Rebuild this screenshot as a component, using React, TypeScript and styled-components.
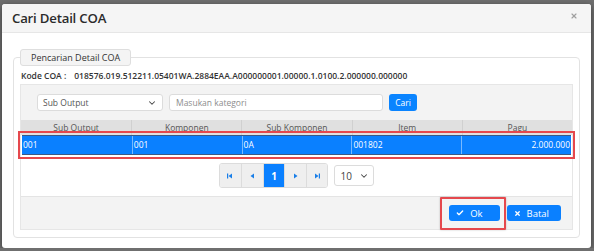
import React from 'react'
import styled, { createGlobalStyle } from 'styled-components'
import { Check, ChevronDown, X } from 'lucide-react'

const GlobalStyle = createGlobalStyle`
    * { box-sizing: border-box; }
    body {
        margin: 0;
        background: #6f6f6f;
        font-family: "Open Sans", "Noto Sans", sans-serif;
        color: #333;
    }
`

const columns = ["Sub Output", "Komponen", "Sub Komponen", "Item", "Pagu"]
const rows = [
    { subOutput: "001", komponen: "001", subKomponen: "0A", item: "001802", pagu: "2.000.000" }
]

const PageIcon = ({ kind }: { kind: 'first' | 'prev' | 'next' | 'last' }) => {
    const left = kind === 'first' || kind === 'prev'
    const bar = kind === 'first' || kind === 'last'
    return (
        <svg width="6" height="6" viewBox="0 0 6 6">
            {left ? <polygon points="5,0.5 5,5.5 1.5,3" fill="#1a7fe8" /> : <polygon points="1,0.5 1,5.5 4.5,3" fill="#1a7fe8" />}
            {bar && (left ? <rect x="0" y="0.5" width="1.2" height="5" fill="#1a7fe8" /> : <rect x="4.8" y="0.5" width="1.2" height="5" fill="#1a7fe8" />)}
        </svg>
    )
}

export default function App() {
    const [selected] = React.useState(0)
    return (
        <>
            <GlobalStyle />
            <Modal>
                <Header>
                    <Title>Cari Detail COA</Title>
                    <CloseButton><X size={8} strokeWidth={3.5} /></CloseButton>
                </Header>
                <Body>
                    <Fieldset>
                        <Legend>Pencarian Detail COA</Legend>
                        <KodeRow>
                            <span>Kode COA :</span>
                            <span>018576.019.512211.05401WA.2884EAA.A000000001.00000.1.0100.2.000000.000000</span>
                        </KodeRow>
                        <Panel>
                            <SearchRow>
                                <Select>
                                    Sub Output
                                    <ChevronDown size={10} strokeWidth={2.5} color="#444" />
                                </Select>
                                <Input placeholder="Masukan kategori" />
                                <SmallButton>Cari</SmallButton>
                            </SearchRow>
                            <TableArea>
                                <HeadRow>
                                    {columns.map(c => <HeadCell key={c}>{c}</HeadCell>)}
                                </HeadRow>
                                {rows.map((r, i) => (
                                    <DataRow key={i} $active={i === selected}>
                                        <Cell>{r.subOutput}</Cell>
                                        <Cell>{r.komponen}</Cell>
                                        <Cell>{r.subKomponen}</Cell>
                                        <Cell>{r.item}</Cell>
                                        <Cell $right>{r.pagu}</Cell>
                                    </DataRow>
                                ))}
                                <PagerRow>
                                    <Pager>
                                        <PageButton><PageIcon kind="first" /></PageButton>
                                        <PageButton><PageIcon kind="prev" /></PageButton>
                                        <PageButton $active>1</PageButton>
                                        <PageButton><PageIcon kind="next" /></PageButton>
                                        <PageButton><PageIcon kind="last" /></PageButton>
                                    </Pager>
                                    <SizeSelect>
                                        10
                                        <ChevronDown size={10} strokeWidth={2.5} color="#444" />
                                    </SizeSelect>
                                </PagerRow>
                            </TableArea>
                            <Footer>
                                <ActionButton $highlight>
                                    <Check size={8} strokeWidth={4} />
                                    Ok
                                </ActionButton>
                                <ActionButton>
                                    <X size={7} strokeWidth={4.5} />
                                    Batal
                                </ActionButton>
                            </Footer>
                        </Panel>
                    </Fieldset>
                </Body>
            </Modal>
        </>
    )
}

const Modal = styled.div`
    margin: 4px 3px 0 2px;
    width: 589px;
    height: 244px;
    background: #fff;
    border-radius: 3px;
    box-shadow: 0 2px 6px rgba(0, 0, 0, 0.5);
    display: flex;
    flex-direction: column;
    overflow: hidden;
`
const Header = styled.div`
    height: 29px;
    flex-shrink: 0;
    background: #f5f5f5;
    border-bottom: 1px solid #e6e6e6;
    display: flex;
    align-items: center;
    justify-content: space-between;
    padding: 0 13px 0 10px;
`
const Title = styled.h1`
    margin: 0;
    font-size: 13.2px;
    font-weight: 600;
    color: #2b2b2b;
    letter-spacing: -0.2px;
`
const CloseButton = styled.button`
    border: none;
    background: transparent;
    padding: 0;
    color: #a0a0a0;
    display: flex;
    margin-top: -4px;
`
const Body = styled.div`
    padding: 16px 11px 10px 11px;
    flex: 1;
    display: flex;
`
const Fieldset = styled.fieldset`
    margin: 0;
    flex: 1;
    min-width: 0;
    border: 1px solid #e2e2e2;
    border-radius: 4px;
    padding: 0 6px 7px 6px;
    display: flex;
    flex-direction: column;
`
const Legend = styled.legend`
    margin: 0;
    padding: 0 10px;
    height: 17px;
    line-height: 15px;
    font-size: 9px;
    color: #333;
    background: #f4f4f4;
    border: 1px solid #dedede;
    border-radius: 3px;
`
const KodeRow = styled.div`
    height: 18px;
    display: flex;
    align-items: center;
    gap: 8px;
    padding-left: 1px;
    font-size: 8.5px;
    font-weight: 600;
    color: #333;
`
const Panel = styled.div`
    flex: 1;
    background: #f3f3f3;
    border: 1px solid #e6e6e6;
    display: flex;
    flex-direction: column;
`
const SearchRow = styled.div`
    display: flex;
    gap: 6px;
    padding: 9px 16px 0 16px;
    margin-bottom: 9px;
`
const Select = styled.div`
    width: 126px;
    height: 17px;
    background: #fff;
    border: 1px solid #dcdcdc;
    border-radius: 3px;
    display: flex;
    align-items: center;
    justify-content: space-between;
    padding: 0 5px 0 5px;
    font-size: 8.5px;
    color: #555;
`
const Input = styled.input`
    width: 214px;
    height: 17px;
    border: 1px solid #dcdcdc;
    border-radius: 3px;
    padding: 0 6px;
    font-family: inherit;
    font-size: 8.5px;
    outline: none;
    &::placeholder { color: #8d8d8d; }
`
const SmallButton = styled.button`
    width: 28px;
    height: 17px;
    border: none;
    border-radius: 3px;
    background: #0a84ff;
    color: #fff;
    font-family: inherit;
    font-size: 8.5px;
    padding: 0;
`
const TableArea = styled.div`
    background: #fff;
    display: flex;
    flex-direction: column;
    padding-bottom: 8px;
    border-bottom: 1px solid #e4e4e4;
`
const HeadRow = styled.div`
    display: grid;
    grid-template-columns: repeat(5, 1fr);
    height: 15px;
    background: #e0e0e0;
`
const HeadCell = styled.div`
    font-size: 8.5px;
    color: #555;
    text-align: center;
    line-height: 16px;
    border-left: 1px solid #d0d0d0;
    &:first-child { border-left: none; }
`
const DataRow = styled.div<{ $active?: boolean }>`
    display: grid;
    grid-template-columns: repeat(5, 1fr);
    height: 20px;
    background: ${p => p.$active ? '#0a80ff' : '#fff'};
    color: ${p => p.$active ? '#fff' : '#333'};
    border-top: 1px solid #3a5a86;
    border-bottom: 1px solid #3a5a86;
    outline: ${p => p.$active ? '2px solid #e5484d' : 'none'};
    outline-offset: 2px;
    margin: 0 1px;
`
const Cell = styled.div<{ $right?: boolean }>`
    font-size: 8.5px;
    line-height: 18px;
    padding: 0 1px;
    text-align: ${p => p.$right ? 'right' : 'left'};
    border-left: 1px solid rgba(255, 255, 255, 0.45);
    &:first-child { border-left: none; }
`
const PagerRow = styled.div`
    display: flex;
    justify-content: center;
    align-items: center;
    gap: 6px;
    margin-top: 8px;
`
const Pager = styled.div`
    display: flex;
    border: 1px solid #dcdcdc;
    border-radius: 3px;
    overflow: hidden;
`
const PageButton = styled.div<{ $active?: boolean }>`
    width: 21.6px;
    height: 23px;
    display: flex;
    align-items: center;
    justify-content: center;
    background: ${p => p.$active ? '#0a80ff' : '#efefef'};
    color: #fff;
    font-size: 10px;
    font-weight: 700;
    border-left: 1px solid #dcdcdc;
    &:first-child { border-left: none; }
`
const SizeSelect = styled.div`
    width: 40px;
    height: 21px;
    background: #fff;
    border: 1px solid #dcdcdc;
    border-radius: 3px;
    display: flex;
    align-items: center;
    justify-content: space-between;
    padding: 0 4px 0 5px;
    font-size: 10px;
    color: #444;
`
const Footer = styled.div`
    flex: 1;
    display: flex;
    justify-content: flex-end;
    align-items: flex-start;
    gap: 7px;
    padding: 8px 11px 0 0;
`
const ActionButton = styled.button<{ $highlight?: boolean }>`
    position: relative;
    height: 16px;
    border: none;
    border-radius: 3px;
    background: #0a80ff;
    color: #fff;
    font-family: inherit;
    font-size: 9.5px;
    font-weight: 500;
    display: flex;
    align-items: center;
    gap: 6px;
    padding: 0 ${p => p.$highlight ? '17px' : '12px'} 0 7px;
    &::after {
        content: '';
        display: ${p => p.$highlight ? 'block' : 'none'};
        position: absolute;
        inset: -8px -6px -9px -9px;
        border: 2px solid #e5484d;
        border-radius: 1px;
        box-shadow: 0 0 2px rgba(0, 0, 0, 0.25);
    }
`
